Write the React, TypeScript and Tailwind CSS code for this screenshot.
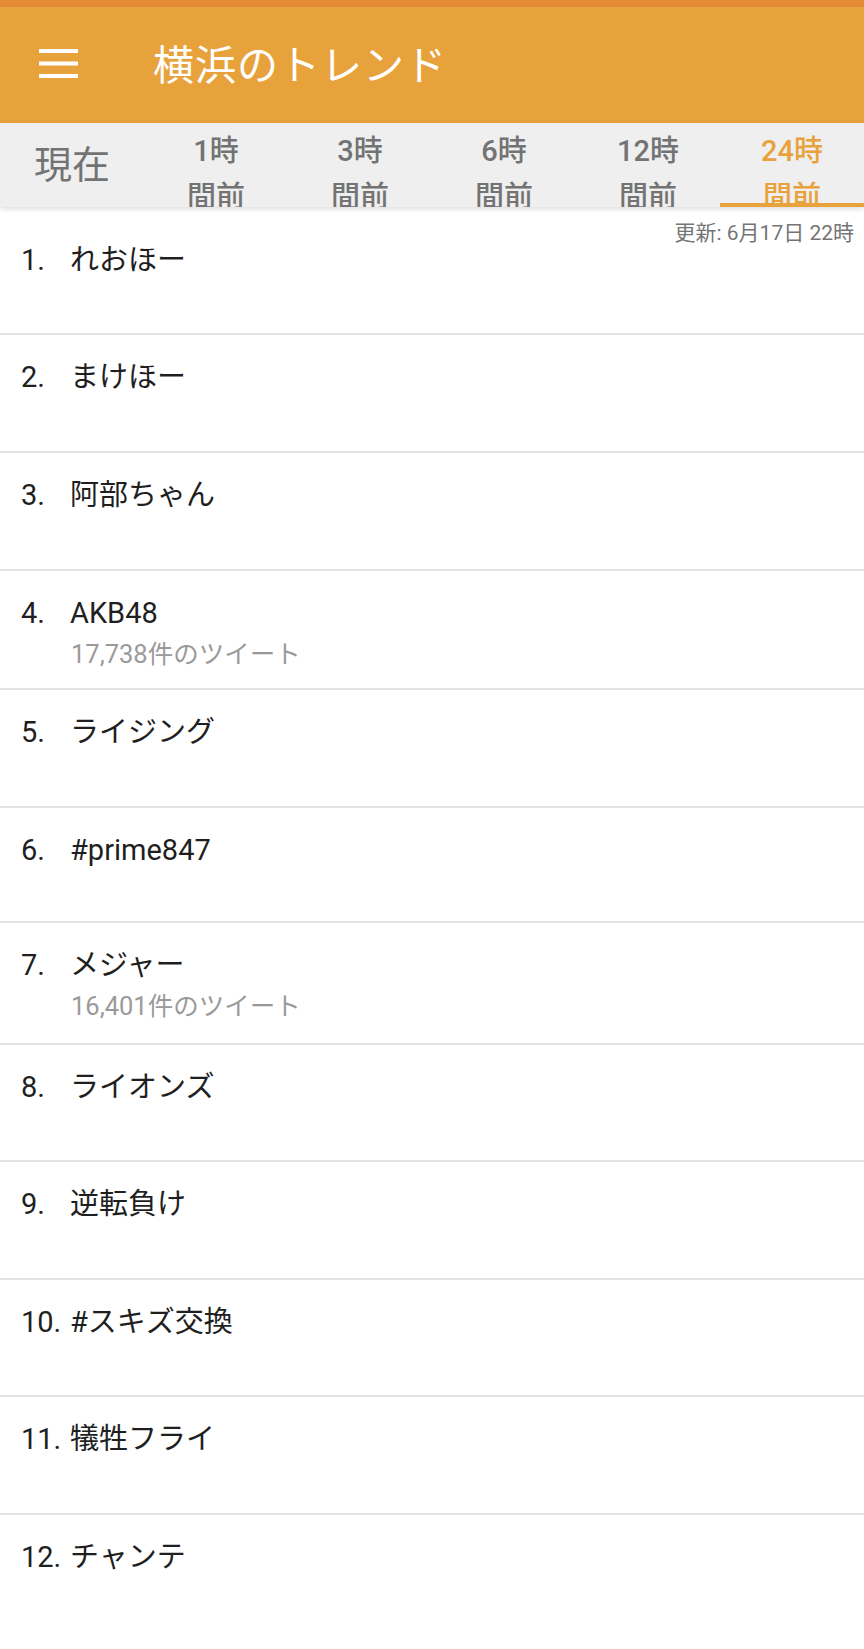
import React from 'react';

type Trend = { name: string; tweets?: string; h: string };

const trends: Trend[] = [
  { name: 'れおほー', h: 'h-[128px] pt-[35px]' },
  { name: 'まけほー', h: 'h-[118px] pt-[24px]' },
  { name: '阿部ちゃん', h: 'h-[118px] pt-[24px]' },
  { name: 'AKB48', tweets: '17,738件のツイート', h: 'h-[119px] pt-[24px]' },
  { name: 'ライジング', h: 'h-[118px] pt-[24px]' },
  { name: '#prime847', h: 'h-[115px] pt-[24px]' },
  { name: 'メジャー', tweets: '16,401件のツイート', h: 'h-[122px] pt-[24px]' },
  { name: 'ライオンズ', h: 'h-[117px] pt-[24px]' },
  { name: '逆転負け', h: 'h-[118px] pt-[24px]' },
  { name: '#スキズ交換', h: 'h-[117px] pt-[24px]' },
  { name: '犠牲フライ', h: 'h-[118px] pt-[24px]' },
  { name: 'チャンテ', h: 'h-[137px] pt-[24px]' },
];

const tabs = ['1時', '3時', '6時', '12時', '24時'];

export default function App() {
  return (
    <div className="min-h-screen bg-white flex flex-col" style={{ fontFamily: 'Roboto, "Noto Sans CJK JP", sans-serif' }}>
      {/* Status strip + toolbar */}
      <div className="h-[7px] bg-[#e48c36]" />
      <header className="h-[116px] bg-[#e8a23c] flex items-center">
        <div className="pl-[39px] w-[153px] shrink-0">
          <svg width="40" height="32" viewBox="0 0 40 32" className="block">
            <rect x="0" y="0" width="39" height="4" fill="#fff" />
            <rect x="0" y="12.5" width="39" height="4" fill="#fff" />
            <rect x="0" y="25" width="39" height="4" fill="#fff" />
          </svg>
        </div>
        <h1 className="text-white text-[41px] leading-none tracking-[1px] mt-[2px]">横浜のトレンド</h1>
      </header>

      {/* Time tabs */}
      <nav className="h-[84px] bg-[#efefef] grid grid-cols-6 shadow-[0_2px_5px_rgba(0,0,0,0.14)] relative z-10">
        <div className="flex items-center justify-center text-[38px] text-[#737373] leading-none">現在</div>
        {tabs.map((t, i) => {
          const active = i === tabs.length - 1;
          return (
            <div key={t} className="relative overflow-hidden flex flex-col items-center pt-[5px]">
              <span className={`text-[29px] leading-[46px] font-medium ${active ? 'text-[#e8a23c]' : 'text-[#737373]'}`}>{t}</span>
              <span className={`text-[29px] leading-[46px] font-medium ${active ? 'text-[#e8a23c]' : 'text-[#737373]'}`}>間前</span>
              {active && <div className="absolute left-0 right-0 bottom-0 h-[4px] bg-[#e8a23c]" />}
            </div>
          );
        })}
      </nav>

      {/* Trend list */}
      <div className="flex flex-col">
        {trends.map((t, i) => (
          <div
            key={t.name}
            className={`relative ${t.h} ${i < trends.length - 1 ? 'border-b-2 border-[#e2e2e2]' : ''} pl-[21px]`}
          >
            {i === 0 && (
              <span className="absolute right-[10px] top-[14px] text-[21px] leading-[24px] text-[#757575]">更新: 6月17日 22時</span>
            )}
            <div className="flex items-center text-[29px] leading-[36px] text-[#1f1f1f]">
              <span className="w-[49px] shrink-0">{i + 1}.</span>
              <span>{t.name}</span>
            </div>
            {t.tweets && (
              <div className="pl-[50px] mt-[8px] text-[25.5px] leading-[30px] text-[#9a9a9a]">{t.tweets}</div>
            )}
          </div>
        ))}
      </div>
    </div>
  );
}
